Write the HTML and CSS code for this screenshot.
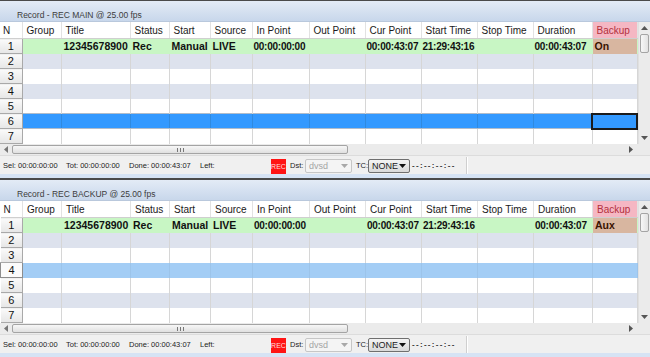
FILE: index.html
```html
<!DOCTYPE html>
<html lang="en">
<head>
    <meta charset="UTF-8">
    <meta name="viewport" content="width=device-width, initial-scale=1.0">
    <title>Record</title>
    <link rel="stylesheet" href="styles.css">
</head>
<body>

    <!-- Main recorder -->
    <div class="panel">
        <div class="titlebar">Record - REC MAIN @ 25.00 fps</div>
        <div class="gridbody">
            <table class="grid">
                <colgroup>
                    <col style="width:22px"><col style="width:39px"><col style="width:69px"><col style="width:39px">
                    <col style="width:41px"><col style="width:42px"><col style="width:57px"><col style="width:56px">
                    <col style="width:56px"><col style="width:56px"><col style="width:56px"><col style="width:59px">
                    <col style="width:45px">
                </colgroup>
                <thead>
                    <tr>
                        <th>N</th><th>Group</th><th>Title</th><th>Status</th><th>Start</th><th>Source</th>
                        <th>In Point</th><th>Out Point</th><th>Cur Point</th><th>Start Time</th><th>Stop Time</th>
                        <th>Duration</th><th class="backup">Backup</th>
                    </tr>
                </thead>
                <tbody>
                    <tr class="live">
                        <td class="num">1</td><td></td><td>12345678900</td><td>Rec</td><td>Manual</td><td>LIVE</td>
                        <td class="tc">00:00:00:00</td><td></td><td class="tc">00:00:43:07</td><td class="tc">21:29:43:16</td><td></td>
                        <td class="tc">00:00:43:07</td><td class="bk">On</td>
                    </tr>
                    <tr class="alt"><td class="num">2</td><td></td><td></td><td></td><td></td><td></td><td></td><td></td><td></td><td></td><td></td><td></td><td></td></tr>
                    <tr><td class="num">3</td><td></td><td></td><td></td><td></td><td></td><td></td><td></td><td></td><td></td><td></td><td></td><td></td></tr>
                    <tr class="alt"><td class="num">4</td><td></td><td></td><td></td><td></td><td></td><td></td><td></td><td></td><td></td><td></td><td></td><td></td></tr>
                    <tr><td class="num">5</td><td></td><td></td><td></td><td></td><td></td><td></td><td></td><td></td><td></td><td></td><td></td><td></td></tr>
                    <tr class="selected"><td class="num">6</td><td></td><td></td><td></td><td></td><td></td><td></td><td></td><td></td><td></td><td></td><td></td><td class="focus"></td></tr>
                    <tr><td class="num">7</td><td></td><td></td><td></td><td></td><td></td><td></td><td></td><td></td><td></td><td></td><td></td><td></td></tr>
                </tbody>
            </table>
            <div class="vscroll">
                <div class="arrow"><svg width="7" height="4"><path d="M0 4 L3.5 0 L7 4 Z" fill="#555"/></svg></div>
                <div class="vthumb"></div>
                <div class="vtrack"></div>
                <div class="arrow"><svg width="7" height="4"><path d="M0 0 L3.5 4 L7 0 Z" fill="#555"/></svg></div>
            </div>
        </div>
        <div class="hscroll">
            <div class="harrow"><svg width="4" height="7"><path d="M4 0 L0 3.5 L4 7 Z" fill="#777"/></svg></div>
            <div class="htrack">
                <div class="hthumb"><span class="grip"></span></div>
            </div>
            <div class="harrow"><svg width="4" height="7"><path d="M0 0 L4 3.5 L0 7 Z" fill="#555"/></svg></div>
            <div class="corner"></div>
        </div>
        <div class="status">
            <span class="stat w63">Sel: 00:00:00:00</span>
            <span class="stat w63">Tot: 00:00:00:00</span>
            <span class="stat w71">Done: 00:00:43:07</span>
            <span class="stat w71">Left:</span>
            <span class="rec">REC</span>
            <span class="lbl dst">Dst:</span>
            <span class="combo disabled">dvsd<svg width="7" height="4"><path d="M0 0 L3.5 4 L7 0 Z" fill="#a8a8a8"/></svg></span>
            <span class="lbl">TC:</span>
            <span class="combo">NONE<svg width="7" height="4"><path d="M0 0 L3.5 4 L7 0 Z" fill="#111"/></svg></span>
            <span class="dashes">--:--:--:--</span>
            <span class="sep"></span>
        </div>
        <div class="band"></div>
    </div>

    <!-- Backup recorder -->
    <div class="panel">
        <div class="titlebar">Record - REC BACKUP @ 25.00 fps</div>
        <div class="gridbody">
            <table class="grid">
                <colgroup>
                    <col style="width:22px"><col style="width:39px"><col style="width:69px"><col style="width:39px">
                    <col style="width:41px"><col style="width:42px"><col style="width:57px"><col style="width:56px">
                    <col style="width:56px"><col style="width:56px"><col style="width:56px"><col style="width:59px">
                    <col style="width:45px">
                </colgroup>
                <thead>
                    <tr>
                        <th>N</th><th>Group</th><th>Title</th><th>Status</th><th>Start</th><th>Source</th>
                        <th>In Point</th><th>Out Point</th><th>Cur Point</th><th>Start Time</th><th>Stop Time</th>
                        <th>Duration</th><th class="backup">Backup</th>
                    </tr>
                </thead>
                <tbody>
                    <tr class="live">
                        <td class="num">1</td><td></td><td>12345678900</td><td>Rec</td><td>Manual</td><td>LIVE</td>
                        <td class="tc">00:00:00:00</td><td></td><td class="tc">00:00:43:07</td><td class="tc">21:29:43:16</td><td></td>
                        <td class="tc">00:00:43:07</td><td class="bk">Aux</td>
                    </tr>
                    <tr class="alt"><td class="num">2</td><td></td><td></td><td></td><td></td><td></td><td></td><td></td><td></td><td></td><td></td><td></td><td></td></tr>
                    <tr><td class="num">3</td><td></td><td></td><td></td><td></td><td></td><td></td><td></td><td></td><td></td><td></td><td></td><td></td></tr>
                    <tr class="hilite"><td class="num">4</td><td></td><td></td><td></td><td></td><td></td><td></td><td></td><td></td><td></td><td></td><td></td><td></td></tr>
                    <tr><td class="num">5</td><td></td><td></td><td></td><td></td><td></td><td></td><td></td><td></td><td></td><td></td><td></td><td></td></tr>
                    <tr class="alt"><td class="num">6</td><td></td><td></td><td></td><td></td><td></td><td></td><td></td><td></td><td></td><td></td><td></td><td></td></tr>
                    <tr><td class="num">7</td><td></td><td></td><td></td><td></td><td></td><td></td><td></td><td></td><td></td><td></td><td></td><td></td></tr>
                </tbody>
            </table>
            <div class="vscroll">
                <div class="arrow"><svg width="7" height="4"><path d="M0 4 L3.5 0 L7 4 Z" fill="#555"/></svg></div>
                <div class="vthumb"></div>
                <div class="vtrack"></div>
                <div class="arrow"><svg width="7" height="4"><path d="M0 0 L3.5 4 L7 0 Z" fill="#555"/></svg></div>
            </div>
        </div>
        <div class="hscroll">
            <div class="harrow"><svg width="4" height="7"><path d="M4 0 L0 3.5 L4 7 Z" fill="#777"/></svg></div>
            <div class="htrack">
                <div class="hthumb"><span class="grip"></span></div>
            </div>
            <div class="harrow"><svg width="4" height="7"><path d="M0 0 L4 3.5 L0 7 Z" fill="#555"/></svg></div>
            <div class="corner"></div>
        </div>
        <div class="status">
            <span class="stat w63">Sel: 00:00:00:00</span>
            <span class="stat w63">Tot: 00:00:00:00</span>
            <span class="stat w71">Done: 00:00:43:07</span>
            <span class="stat w71">Left:</span>
            <span class="rec">REC</span>
            <span class="lbl dst">Dst:</span>
            <span class="combo disabled">dvsd<svg width="7" height="4"><path d="M0 0 L3.5 4 L7 0 Z" fill="#a8a8a8"/></svg></span>
            <span class="lbl">TC:</span>
            <span class="combo">NONE<svg width="7" height="4"><path d="M0 0 L3.5 4 L7 0 Z" fill="#111"/></svg></span>
            <span class="dashes">--:--:--:--</span>
            <span class="sep"></span>
        </div>
        <div class="band"></div>
    </div>

</body>
</html>
```

FILE: styles.css
```css
body {
    margin: 0;
    padding-top: 1px;
    background-color: #4a4a4a;
    font-family: "Liberation Sans", Arial, sans-serif;
    color: #111;
    width: 650px;
    height: 357px;
    overflow: hidden;
}
.panel {
    background-color: #f0f0f0;
    margin-bottom: 2px;
}
.titlebar {
    height: 21px;
    box-sizing: border-box;
    padding: 9px 0 0 17px;
    font-size: 8.5px;
    color: #3c3c3c;
    background: linear-gradient(#e3ebf6, #c8d7eb);
    border-bottom: 1px solid #b9c8dc;
}

/* grid */
.gridbody {
    display: flex;
}
.grid {
    width: 637px;
    table-layout: fixed;
    border-collapse: collapse;
    background-color: #fff;
}
.grid th {
    height: 16px;
    padding: 0 0 0 4px;
    font-size: 10px;
    font-weight: normal;
    text-align: left;
    color: #1a1a1a;
    background-color: #fff;
    border-right: 1px solid #e2e2e2;
    border-bottom: 1px solid #cfcfcf;
    white-space: nowrap;
    overflow: hidden;
}
.grid th:first-child {
    padding-left: 3px;
}
.grid th.backup {
    background-color: #f5b7c3;
    color: #b3303c;
}
.grid td {
    height: 15px;
    padding: 0 0 0 2px;
    font-size: 10.5px;
    font-weight: bold;
    white-space: nowrap;
    overflow: hidden;
    border-right: 1px solid #d6d6d6;
    box-sizing: border-box;
}
.grid td.tc {
    padding-left: 1px;
    font-size: 10px;
    letter-spacing: -0.25px;
}
.grid td.num {
    padding: 0;
    text-align: center;
    font-size: 11px;
    font-weight: normal;
    background: linear-gradient(#fafafa, #e6e6e6);
    border-right: 1px solid #a9a9a9;
    border-bottom: 1px solid #a9a9a9;
}
.grid tr.live td {
    background-color: #c8f6c4;
    border-right-color: #c8f6c4;
}
.grid tr.live td.bk {
    background-color: #d8b6a0;
    color: #3a1400;
}
.grid tr.alt td {
    background-color: #dde2ed;
}
.grid tr.selected td {
    background-color: #3399ff;
    border-right-color: #2f8ae0;
    border-top: 1px solid #b0bccb;
    border-bottom: 1px solid #b0bccb;
}
.grid tr.selected td.focus {
    border: 2px solid #1b1b1b;
}
.grid tr.hilite td {
    background-color: #a3cdf5;
    border-right-color: #9cc4ea;
}
.grid tr.live td.num,
.grid tr.alt td.num,
.grid tr.selected td.num,
.grid tr.hilite td.num {
    background: linear-gradient(#fafafa, #e6e6e6);
    border-right: 1px solid #a9a9a9;
    border-top: none;
    border-bottom: 1px solid #a9a9a9;
}
.grid tr.hilite td.num {
    background: #fbfbfb;
    border: 1px solid #8d8d8d;
}

/* scrollbars */
.vscroll {
    width: 13px;
    display: flex;
    flex-direction: column;
    background-color: #ebebeb;
    border-left: 1px solid #e0e0e0;
    box-sizing: border-box;
}
.arrow {
    height: 12px;
    display: flex;
    align-items: center;
    justify-content: center;
}
.vthumb {
    height: 17px;
    margin: 0 1px;
    border: 1px solid #a4a4a4;
    border-radius: 2px;
    background: linear-gradient(to right, #f7f7f7, #e2e2e2);
}
.vtrack {
    flex: 1;
}
.hscroll {
    height: 11px;
    display: flex;
    background-color: #ebebeb;
}
.harrow {
    width: 12px;
    display: flex;
    align-items: center;
    justify-content: center;
}
.htrack {
    flex: 1;
    padding-top: 1px;
}
.hthumb {
    width: 336px;
    height: 9px;
    box-sizing: border-box;
    border: 1px solid #a4a4a4;
    border-radius: 2px;
    background: linear-gradient(#f7f7f7, #e0e0e0);
    display: flex;
    justify-content: center;
    align-items: center;
}
.grip {
    width: 5px;
    height: 4px;
    border-left: 1px solid #777;
    border-right: 1px solid #777;
    position: relative;
}
.grip::after {
    content: "";
    position: absolute;
    left: 2px;
    top: 0;
    width: 1px;
    height: 4px;
    background-color: #777;
}
.corner {
    width: 13px;
}

/* status bar */
.status {
    height: 19px;
    display: flex;
    align-items: center;
    padding-left: 3px;
    font-size: 7.5px;
    color: #222;
    background-color: #f0f0f0;
    border-top: 1px solid #dcdcdc;
    box-sizing: border-box;
}
.stat {
    white-space: nowrap;
}
.w63 {
    width: 63px;
}
.w71 {
    width: 71px;
}
.rec {
    width: 15px;
    height: 15px;
    line-height: 15px;
    text-align: center;
    background-color: #ff1414;
    color: #ffdede;
    font-size: 7px;
    margin-top: 2px;
}
.lbl {
    margin-left: 4px;
    width: 11px;
}
.lbl.dst {
    width: 15px;
}
.combo {
    width: 42px;
    height: 14px;
    box-sizing: border-box;
    margin: 1px 0 0 1px;
    padding: 0 3px;
    display: flex;
    align-items: center;
    justify-content: space-between;
    font-size: 9px;
    border: 1px solid #6f6f6f;
    border-radius: 2px;
    background: linear-gradient(#f4f4f4, #d9d9d9);
}
.combo.disabled {
    width: 47px;
    margin-left: 0;
    color: #a4a4a4;
    border-color: #c6c6c6;
    background: #f4f4f4;
}
.dashes {
    margin-left: 2px;
    width: 54px;
    font-size: 8px;
    font-weight: bold;
    letter-spacing: 1.3px;
    color: #333;
    white-space: nowrap;
}
.sep {
    width: 1px;
    height: 17px;
    background-color: #cfcfcf;
    border-right: 1px solid #fff;
}
.band {
    height: 4px;
    background-color: #d6e3f4;
}
```
